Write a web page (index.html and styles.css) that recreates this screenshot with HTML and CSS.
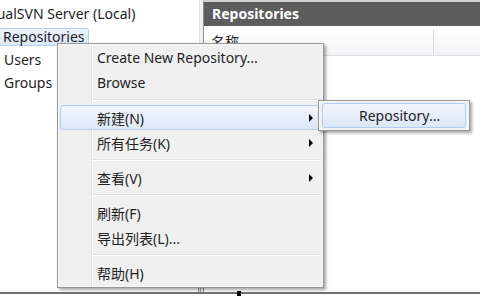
FILE: index.html
```html
<html>

<head>
    <link rel="stylesheet" href="styles.css">
</head>

<body>
<div class="window">
    <div class="panes">
        <div class="tree">
            <div class="node root"><span class="label">VisualSVN Server (Local)</span></div>
            <div class="node"><span class="label selected">Repositories</span></div>
            <div class="node"><span class="label">Users</span></div>
            <div class="node"><span class="label">Groups</span></div>
        </div>
        <div class="splitter"></div>
        <div class="content">
            <div class="title">Repositories</div>
            <div class="columns">
                <div class="col col-name">名称</div>
                <div class="col col-rest"></div>
            </div>
        </div>
    </div>
    <div class="statusbar">
        <span class="handle"></span>
        <span class="grip"></span>
    </div>
</div>

<div class="menu">
    <div class="item">Create New Repository...</div>
    <div class="item">Browse</div>
    <div class="sep"></div>
    <div class="item active">新建(N)<span class="arrow"></span></div>
    <div class="item">所有任务(K)<span class="arrow"></span></div>
    <div class="sep"></div>
    <div class="item">查看(V)<span class="arrow"></span></div>
    <div class="sep"></div>
    <div class="item">刷新(F)</div>
    <div class="item">导出列表(L)...</div>
    <div class="sep"></div>
    <div class="item">帮助(H)</div>
</div>

<div class="menu submenu">
    <div class="item active">Repository...</div>
</div>
</body>

</html>
```

FILE: styles.css
```css
body {
    margin: 0;
    padding: 0;
    font-family: "Noto Sans", "Noto Sans CJK SC", sans-serif;
    font-size: 14px;
    color: #1e1e1e;
    background: #fff;
}

.window {
    width: 480px;
    height: 300px;
    display: flex;
    flex-direction: column;
    overflow: hidden;
}

.panes {
    display: flex;
    height: 292px;
}

/* left tree, scrolled a little to the right */
.tree {
    width: 199px;
    padding-top: 2px;
    overflow: hidden;
    white-space: nowrap;
}

.node {
    height: 23px;
    display: flex;
    align-items: center;
}

.root .label {
    margin-left: -26px;
}

.label {
    padding: 0 3px;
    line-height: 16px;
    border: 1px solid transparent;
}

.label.selected {
    margin-left: -1px;
    background: linear-gradient(to bottom, #ebf3fd, #dbe8f8);
    border-color: #b4d0f2;
    border-radius: 2px;
}

.splitter {
    width: 3px;
    background: #f0f0f0;
    border-left: 1px solid #e3e3e3;
}

/* right pane */
.content {
    flex: 1;
    border-left: 1px solid #8e8e8e;
    border-top: 2px solid #d2d2d2;
}

.title {
    height: 24px;
    line-height: 23px;
    padding-left: 8px;
    background: #5d5d5d;
    color: #fff;
    font-weight: bold;
}

.columns {
    display: flex;
    margin-top: 3px;
    height: 26px;
    background: linear-gradient(to bottom, #ffffff, #f2f3f5);
    border-bottom: 1px solid #dcdddf;
}

.col {
    line-height: 26px;
    padding-left: 7px;
}

.col-name {
    width: 222px;
    border-right: 1px solid #dadbdc;
}

.col-rest {
    flex: 1;
    border-left: 1px solid #fff;
}

.statusbar {
    border-top: 2px solid #727272;
    height: 6px;
    position: relative;
}

.handle {
    position: absolute;
    left: 198px;
    top: -7px;
    width: 1px;
    height: 5px;
    border-left: 1px solid #9a9a9a;
    border-right: 1px solid #9a9a9a;
}

.grip {
    position: absolute;
    left: 237px;
    top: -3px;
    width: 4px;
    height: 5px;
    background: #000;
}

/* context menu */
.menu {
    position: absolute;
    left: 57px;
    top: 43px;
    width: 267px;
    box-sizing: border-box;
    padding: 1px 2px 2px;
    background-color: #f0f0f0;
    background-image: linear-gradient(to right, transparent 33px, #e2e3e3 33px, #e2e3e3 34px, #fff 34px, #fff 35px, transparent 35px);
    border: 1px solid #979797;
    box-shadow: inset 0 0 0 1px #f7f7f7, 2px 2px 3px rgba(0, 0, 0, 0.35);
}

.item {
    height: 25px;
    box-sizing: border-box;
    padding-left: 36px;
    padding-right: 7px;
    display: flex;
    align-items: center;
    justify-content: space-between;
    border: 1px solid transparent;
    border-radius: 3px;
    white-space: nowrap;
}

.item.active {
    background: linear-gradient(to bottom, #f0f5fc, #dde8f7);
    border-color: #b1cdef;
}

.arrow {
    width: 0;
    height: 0;
    border-left: 4px solid #000;
    border-top: 4px solid transparent;
    border-bottom: 4px solid transparent;
}

.sep {
    margin: 4px 0 4px 31px;
    border-top: 1px solid #e0e0e0;
    border-bottom: 1px solid #fff;
}

.submenu {
    left: 318px;
    top: 100px;
    width: 152px;
    padding: 2px 3px;
}
```
